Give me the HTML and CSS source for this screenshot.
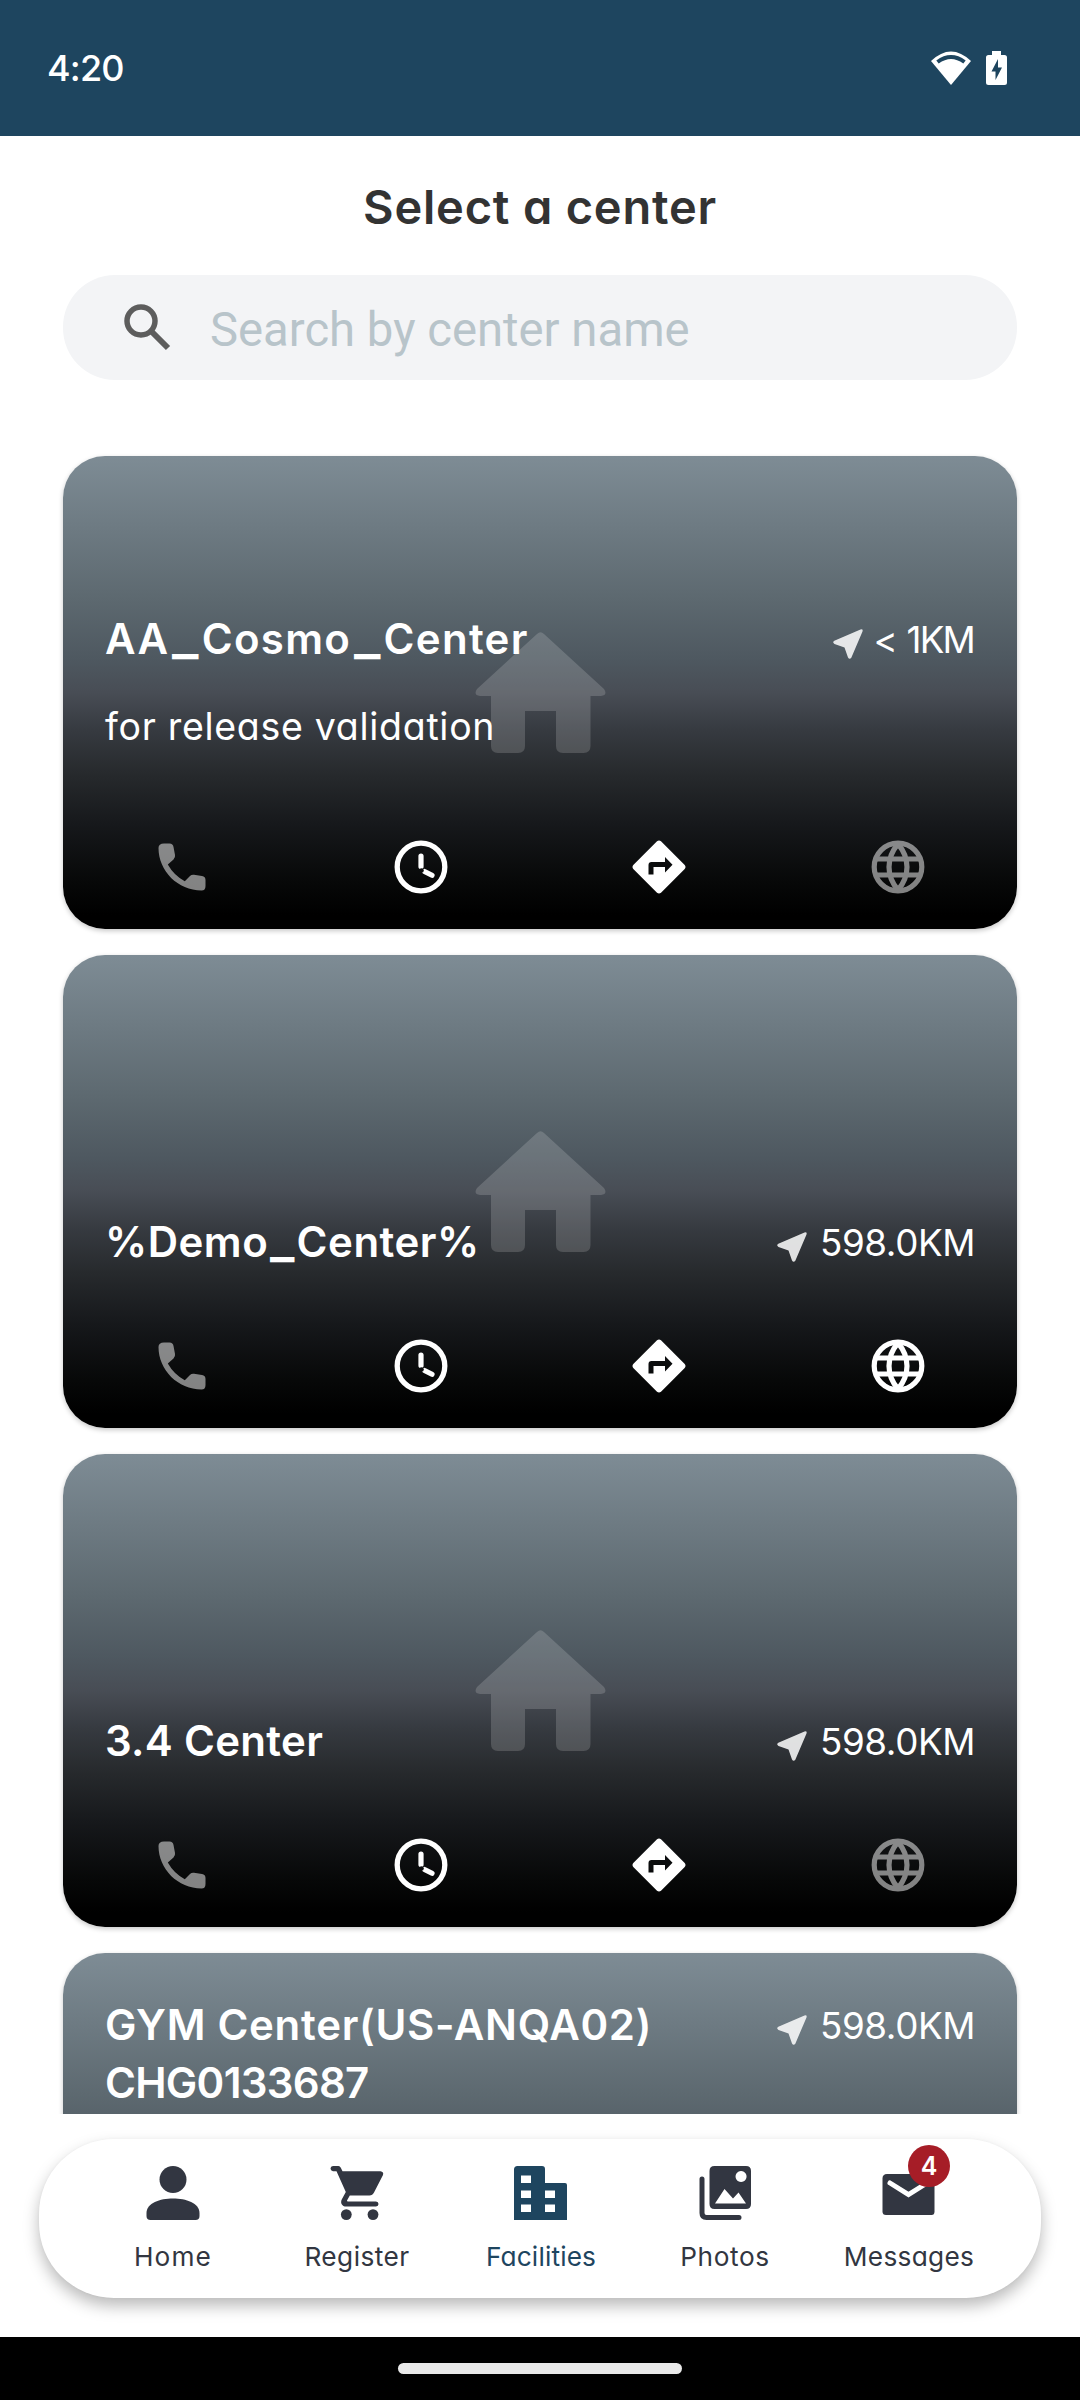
FILE: index.html
```html
<!DOCTYPE html>
<html lang="en">
<head>
<meta charset="utf-8">
<title>Select a center</title>
<link rel="stylesheet" href="styles.css">
</head>
<body>
<svg class="sprite" aria-hidden="true">
  <symbol id="house" viewBox="0 0 131 121"><path d="M62 2q3.500-3.500 7 0L129 57q4 6-3 7H115.500V114q0 7-7 7H88q-7 0-7-7V79H50v35q0 7-7 7H23q-7 0-7-7V64H5q-7-1-3-7z"/></symbol>
  <symbol id="near" viewBox="0 0 30 30"><path d="M27.500.400Q30.300-.300 29.500 2.400L18.300 28.700Q16.500 31 15 28.500L11.500 18.500 1.500 15Q-1 13.500 1.300 11.700z"/></symbol>
  <symbol id="phone" viewBox="0 0 48 48"><path d="M6 .500H11.500Q15 .500 15.500 4L17 12Q17.500 14.500 15.500 16.500L9.800 21.500Q16 32.500 26.800 38.200L32 33Q33.500 31.500 36 31.800L44 33Q47.500 33.500 47.500 37V43Q47.500 47.500 43.500 47.500C20 47.500.500 28 .500 5Q.500.500 6 .500z"/></symbol>
  <symbol id="clock" viewBox="0 0 54 54"><circle cx="27" cy="27" r="23.800" fill="none" stroke="currentColor" stroke-width="5.300"/><path d="M27 16v10.500M30.500 31.500l7.500 3.800" fill="none" stroke="currentColor" stroke-width="5.200" stroke-linecap="round"/><circle cx="27.500" cy="30.500" r="2.300" fill="#0c0d0e"/></symbol>
  <symbol id="route" viewBox="0 0 54 54"><path fill-rule="evenodd" d="M25 1.300q2-1.600 4 0L52.700 25q1.600 2 0 4L29 52.700q-2 1.600-4 0L1.300 29q-1.600-2 0-4zM33 17v5H19.500q-3 0-3 3v9.500h5V27H33v5.500l7.500-7.800z"/></symbol>
  <symbol id="globe" viewBox="0 0 54 54"><g fill="none" stroke="currentColor" stroke-width="5.200"><circle cx="27" cy="27" r="23.800"/><path d="M4.500 19h45M4.500 35h45M27 4C15 18 15 36 27 50M27 4C39 18 39 36 27 50"/></g></symbol>
</svg>
<header class="status">
  <span class="time">4:20</span>
  <span class="status-icons">
    <svg width="40" height="34" viewBox="0 0 40 34"><path d="M0 10Q20-9 40 10L20 34z" fill="#fff"/><path d="M6.500 11Q20 1 33.500 11" fill="none" stroke="#1e455f" stroke-width="4"/></svg>
    <svg width="21" height="34" viewBox="0 0 21 34"><path d="M6 0h9v4h3.500Q21 4 21 6.500v25q0 2.500-2.500 2.500h-16Q0 34 0 31.500v-25Q0 4 2.500 4H6z" fill="#fff"/><path d="M12 8L5.500 20.500H9.500V29L16 16.500H12z" fill="#1e455f"/></svg>
  </span>
</header>
<h1 class="title"><span>Select a center</span></h1>
<div class="search">
  <svg width="47" height="47" viewBox="0 0 47 47"><circle cx="17" cy="17" r="14" fill="none" stroke="#5d5d5d" stroke-width="5.500"/><path d="M27.500 27.500L44 44" stroke="#5d5d5d" stroke-width="6"/></svg>
  <span class="hint">Search by center name</span>
</div>
<main class="list">
  <article class="card">
    <svg class="house"><use href="#house"/></svg>
    <div class="head"><h2><span class="t1">AA<i>_</i>Cosmo<i>_</i>Center</span></h2><p class="dist"><svg><use href="#near"/></svg><span class="km short">&lt; 1KM</span></p></div>
    <p class="sub">for release validation</p>
    <div class="actions"><svg class="phone off"><use href="#phone"/></svg><svg><use href="#clock"/></svg><svg><use href="#route"/></svg><svg class="off"><use href="#globe"/></svg></div>
  </article>
  <article class="card">
    <svg class="house"><use href="#house"/></svg>
    <div class="head"><h2><span class="t2">%Demo<i>_</i>Center%</span></h2><p class="dist"><svg><use href="#near"/></svg><span class="km">598.0KM</span></p></div>
    <div class="actions"><svg class="phone off"><use href="#phone"/></svg><svg><use href="#clock"/></svg><svg><use href="#route"/></svg><svg><use href="#globe"/></svg></div>
  </article>
  <article class="card">
    <svg class="house"><use href="#house"/></svg>
    <div class="head"><h2><span class="t3">3.4 Center</span></h2><p class="dist"><svg><use href="#near"/></svg><span class="km">598.0KM</span></p></div>
    <div class="actions"><svg class="phone off"><use href="#phone"/></svg><svg><use href="#clock"/></svg><svg><use href="#route"/></svg><svg class="off"><use href="#globe"/></svg></div>
  </article>
  <article class="card long">
    <div class="head"><h2><span class="t4">GYM Center(US-ANQA02)</span><br><span class="t5">CHG0133687</span></h2><p class="dist"><svg><use href="#near"/></svg><span class="km">598.0KM</span></p></div>
  </article>
</main>
<nav class="tabs">
  <a class="tab"><svg width="54" height="54" viewBox="0 0 54 54"><circle cx="27" cy="13.500" r="13.500"/><path d="M.500 47C.500 37 14 32.500 27 32.500S53.500 37 53.500 47v3q0 4-4 4h-45q-4 0-4-4z"/></svg><span class="n1">Home</span></a>
  <a class="tab"><svg width="54" height="54" viewBox="0 0 54 54"><path d="M3 0H8.500Q10 0 10.800 1.700L12.500 5.300H50.500Q54 6 53 9L44 26.500Q42.500 29.500 39.500 29.500H19.800L17 34.500Q16.800 35.500 18 35.500H46Q48.500 35.800 48.500 38T46 40.600H16.500C11.500 40.600 10 36.500 12 33L15.800 26 6.500 5.200H3Q.500 5 .500 2.600T3 0z"/><circle cx="16.300" cy="48.600" r="5.400"/><circle cx="43" cy="48.600" r="5.400"/></svg><span class="n2">Register</span></a>
  <a class="tab active"><svg width="54" height="54" viewBox="0 0 54 54"><path fill-rule="evenodd" d="M3.500 0H28q3 0 3 3V17H51q2 0 2 2V54H0V3.500Q0 0 3.500 0zM7 9.500v7.500H17V9.500zM7 24.500V32H17V24.500zM7 38.500V46H17V38.500zM31 24.500V32H41V24.500zM31 38.500V46H41V38.500z"/></svg><span class="n3">Facilities</span></a>
  <a class="tab"><svg width="54" height="54" viewBox="0 0 54 54"><path d="M4 13v34q0 4.500 4.500 4.500H41" fill="none" stroke="#323641" stroke-width="5" stroke-linecap="round"/><path fill-rule="evenodd" d="M16.500 0H48q5 0 5 5V38q0 5-5 5H16.500q-5 0-5-5V5q0-5 5-5zM17 37.500H48L40.500 26.500 35 32.500 26.500 23zM43 5a5.500 5.500 0 1 0 .100 0z"/></svg><span class="n4">Photos</span></a>
  <a class="tab"><svg width="54" height="54" viewBox="0 0 54 54"><path d="M5 8H48q4.500 0 4.500 4V45.500q0 3.500-3 3.500H4Q.500 49 .500 45.500V12.500Q.500 8 5 8z"/><path d="M8 17L26.500 28.500 45 17" fill="none" stroke="#fff" stroke-width="5" stroke-linecap="round"/></svg><b class="badge">4</b><span class="n5">Messages</span></a>
</nav>
<footer class="gesture"><i></i></footer>
</body>
</html>
```
FILE: styles.css
```css
* { box-sizing: border-box; }
body { margin: 0; width: 1080px; height: 2400px; overflow: hidden; display: flex; flex-direction: column; background: #fff; font-family: Inter, "Open Sans", sans-serif; font-feature-settings: "cv11" 1; }
h1, h2, p { margin: 0; }
span { white-space: nowrap; }
svg { fill: currentColor; flex: none; }
.sprite { display: none; }
.status { height: 136px; flex: none; padding: 0 73px 0 47px; background: #1e455f; color: #fff; display: flex; align-items: center; justify-content: space-between; }
.time { font-size: 36px; font-weight: 500; letter-spacing: -0.8px; }
.status-icons { display: flex; gap: 15px; }
.title { height: 139px; flex: none; text-align: center; font-size: 47px; line-height: 142px; font-weight: 600; letter-spacing: .800px; color: #333; }
.search { height: 105px; flex: none; margin: 0 63px; padding-left: 61px; border-radius: 52px; background: #f3f4f6; display: flex; align-items: center; gap: 39px; }
.hint { font-family: Roboto, sans-serif; font-size: 47.250px; line-height: 56px; color: #b8c4ca; padding-top: 5px; }
.list { height: 1674px; flex: none; margin-top: 60px; padding: 16px 63px 0; overflow: hidden; display: flex; flex-direction: column; gap: 26px; }
.card { position: relative; height: 473px; flex: none; border-radius: 42px; color: #fff; display: flex; flex-direction: column; justify-content: flex-end; background: linear-gradient(#7e8c95 0%, #5d6970 30%, #4e5860 43%, #484d55 50%, #363a40 58%, #272a2d 67%, #16181b 78%, #070808 90%, #000 97%); box-shadow: 0 2px 5px rgba(0,0,0,.22); }
.house { position: absolute; left: 411px; top: 176px; width: 133px; height: 121px; color: #fff; opacity: .16; }
.head { position: relative; display: flex; justify-content: space-between; padding: 0 42px; }
h2 { font-size: 42px; line-height: 58px; font-weight: 600; }
h2 i { display: inline-block; font-style: normal; font-weight: 800; letter-spacing: 0; margin: 0 4px; transform: scaleX(1.2); }
.t1 { letter-spacing: 1.300px; }
.t1 i { margin: 0 6px; transform: scaleX(1.3); }
.t2 { letter-spacing: .500px; }
.t3 { letter-spacing: .300px; }
.t4 { letter-spacing: .700px; }
.t5 { letter-spacing: -.700px; }
.dist { display: flex; align-items: flex-start; font-size: 36.750px; line-height: 60px; }
.dist svg { width: 30px; height: 30px; margin: 19px 13px 0 0; opacity: .85; }
.km { letter-spacing: -.400px; }
.short { letter-spacing: -1.800px; word-spacing: 2px; margin-left: -2px; margin-right: 1px; }
.sub { position: relative; padding: 29px 42px 19px; font-size: 37.500px; line-height: 56px; letter-spacing: .700px; }
.actions { height: 125px; margin-top: 30px; display: grid; grid-template-columns: repeat(4, 1fr); justify-items: center; align-items: center; }
.actions svg { width: 54px; height: 54px; }
.actions svg.phone { width: 48px; height: 48px; }
.off { opacity: .5; }
.long { justify-content: flex-start; padding-top: 43px; }
.tabs { height: 159px; flex: none; margin: 25px 39px 39px; padding: 27px 40px 0 42px; border-radius: 75px; display: grid; grid-template-columns: repeat(5, 1fr); background: #fff; box-shadow: 0 8px 16px rgba(0,0,0,.27), 0 0 3px rgba(0,0,0,.03); }
.tab { position: relative; display: flex; flex-direction: column; align-items: center; gap: 20px; color: #323641; font-size: 26.250px; line-height: 34px; }
.active { color: #1e455f; }
.n1 { letter-spacing: 1.100px; }
.n2 { letter-spacing: .450px; }
.n3 { letter-spacing: .150px; }
.n4 { letter-spacing: .600px; }
.n5 { letter-spacing: .300px; }
.badge { position: absolute; left: 91px; top: -21px; width: 42px; height: 42px; border-radius: 50%; background: #a61d27; color: #fff; text-align: center; font-size: 25px; line-height: 42px; font-weight: 600; }
.gesture { height: 63px; flex: none; background: #000; display: flex; justify-content: center; }
.gesture i { width: 284px; height: 11px; margin-top: 26px; border-radius: 6px; background: #e9e9e9; }
```
